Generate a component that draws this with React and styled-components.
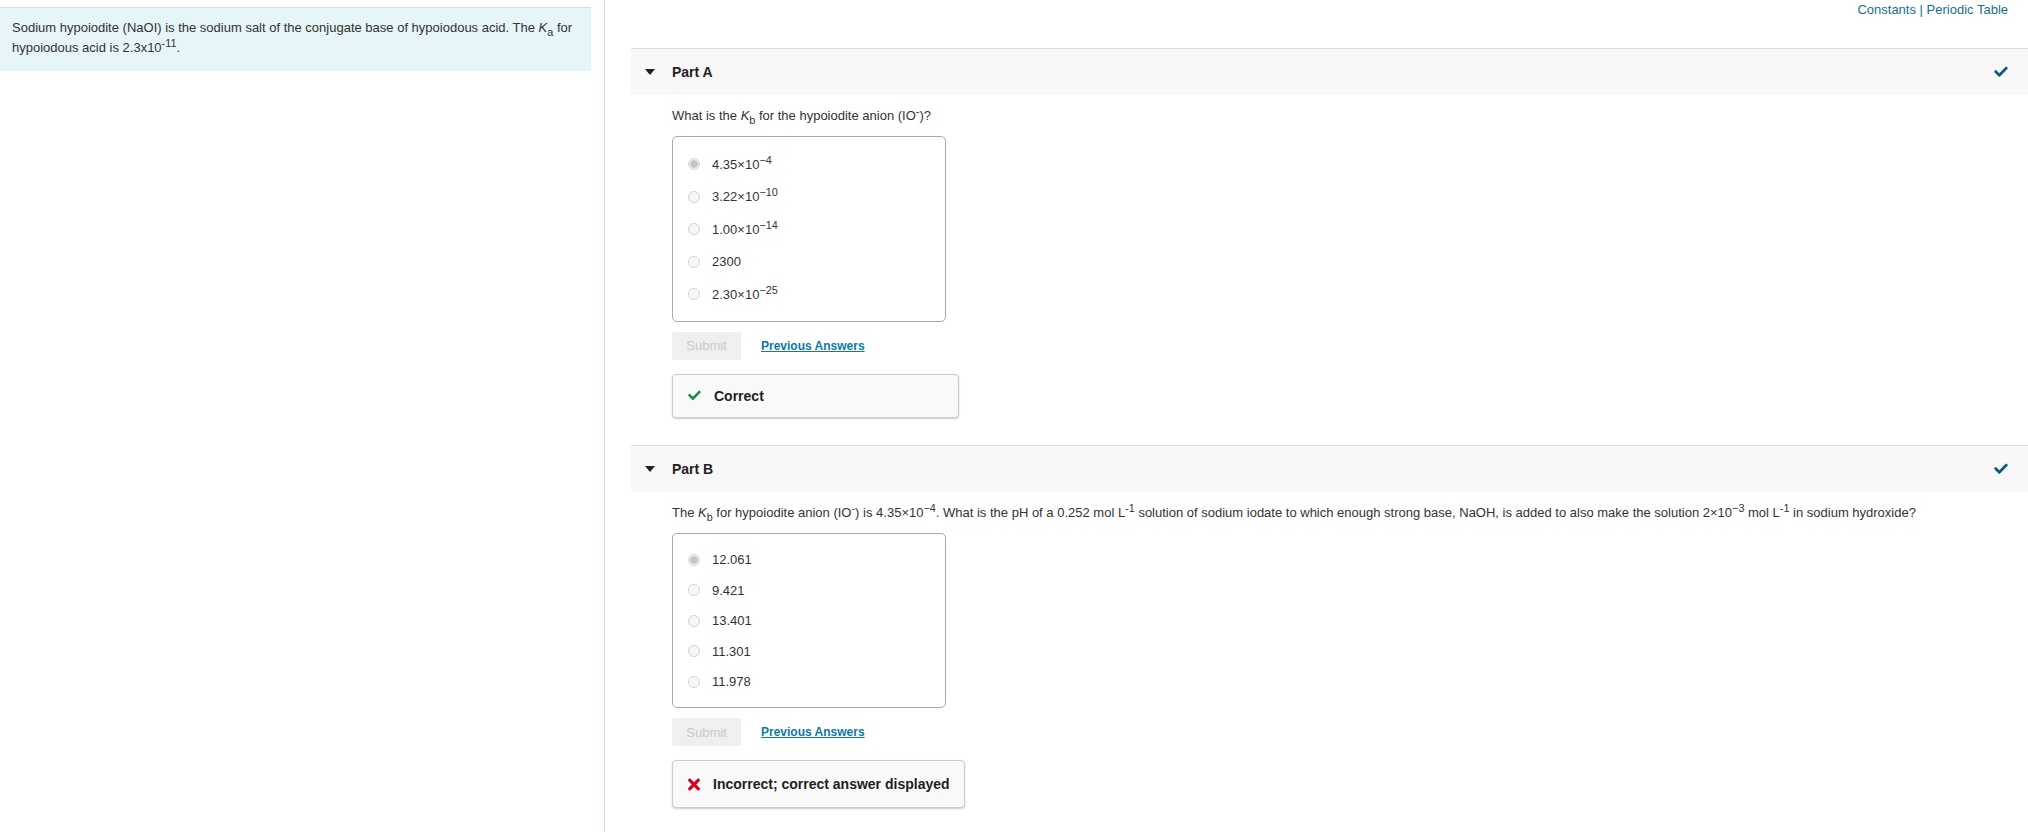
import React from 'react'
import styled, { createGlobalStyle } from 'styled-components'

const GlobalStyle = createGlobalStyle`
  html, body { margin: 0; padding: 0; background: #fff; }
  body {
    font-family: "Liberation Sans", Arial, sans-serif;
    color: #222;
    -webkit-font-smoothing: antialiased;
  }
  sup, sub { line-height: 0; }
`

const Page = styled.div`
  display: flex;
  min-height: 832px;
`

const Intro = styled.aside`
  flex: 0 0 604px;
  padding-top: 7px;
  border-right: 1px solid #c9d7e1;
`

const IntroBox = styled.div`
  width: 591px;
  box-sizing: border-box;
  background: #e6f5f7;
  border-top: 1px solid #dcdcdc;
  padding: 10px 12px 13px;
  font-size: 13px;
  line-height: 20px;
  color: #333;
`

const Main = styled.main`
  flex: 1;
  padding-left: 26px;
`

const TopLinks = styled.div`
  height: 48px;
  box-sizing: border-box;
  padding: 1px 20px 0 0;
  text-align: right;
  font-size: 13px;
  line-height: 17px;
  color: #1a6e8e;
`

const TopLink = styled.a`
  color: #1a6e8e;
  text-decoration: none;
`

const PartHeader = styled.div`
  display: flex;
  align-items: center;
  height: 47px;
  box-sizing: border-box;
  border-top: 1px solid #dddddd;
  background: #f8f8f8;
  padding: 0 20px 0 14px;
`

const Caret = styled.span`
  width: 0;
  height: 0;
  border-left: 5.5px solid transparent;
  border-right: 5.5px solid transparent;
  border-top: 6px solid #222;
  margin-right: 17px;
`

const PartTitle = styled.h2`
  flex: 1;
  margin: 0;
  font-size: 14px;
  font-weight: bold;
  color: #222;
`

const PartBody = styled.div`
  padding: 11px 0 27px 41px;
`

const Question = styled.p`
  margin: 0 0 10px;
  font-size: 13px;
  line-height: 20px;
  color: #333;
`

const Choices = styled.div`
  width: 274px;
  box-sizing: border-box;
  border: 1px solid #aaaaaa;
  border-radius: 5px;
  padding: 11px 0 10px 15px;
`

const Choice = styled.label`
  display: flex;
  align-items: center;
  height: ${p => p.$h}px;
  font-size: 13px;
  color: #333;
`

const Radio = styled.span`
  width: 12px;
  height: 12px;
  box-sizing: border-box;
  border-radius: 50%;
  border: 1px solid #d4d4d4;
  background: ${p => (p.$on ? 'radial-gradient(circle, #c4c4c4 0 3.5px, #efefef 4px)' : '#f7f7f7')};
  margin-right: 12px;
`

const Actions = styled.div`
  display: flex;
  align-items: center;
  gap: 20px;
  margin-top: 10px;
`

const SubmitButton = styled.button`
  width: 69px;
  height: 28px;
  border: none;
  border-radius: 2px;
  background: #efefef;
  color: #cacaca;
  font-family: inherit;
  font-size: 13px;
`

const PrevLink = styled.a`
  font-size: 12px;
  font-weight: bold;
  color: #0a7ba3;
  text-decoration: underline;
`

const Feedback = styled.div`
  display: inline-flex;
  align-items: center;
  min-width: 287px;
  height: ${p => p.$h}px;
  box-sizing: border-box;
  margin-top: 14px;
  padding: 0 14px 0 15px;
  border: 1px solid #cccccc;
  border-radius: 4px;
  background: #f9f9f9;
  box-shadow: 0 1px 2px rgba(0, 0, 0, 0.2);
  font-size: 14px;
  font-weight: bold;
  color: #1f1f1f;
  gap: 13px;
`

const CheckIcon = ({ color, size }) => (
  <svg width={size} height={size * 0.8} viewBox="0 40 512 420" fill={color}>
    <path d="M173.9 439.4l-166.4-166.4c-10-10-10-26.2 0-36.2l36.2-36.2c10-10 26.2-10 36.2 0L192 312.7 432.1 72.6c10-10 26.2-10 36.2 0l36.2 36.2c10 10 10 26.2 0 36.2l-294.4 294.4c-10 10-26.2 10-36.2 0z" />
  </svg>
)

const CrossIcon = () => (
  <svg width="12" height="15" viewBox="0 80 352 352" fill="#d7001f">
    <path d="M242.7 256l100.1-100.1c12.3-12.3 12.3-32.2 0-44.5l-22.2-22.2c-12.3-12.3-32.2-12.3-44.5 0L176 189.3 75.9 89.2c-12.3-12.3-32.2-12.3-44.5 0L9.2 111.4c-12.3 12.3-12.3 32.2 0 44.5L109.3 256 9.2 356.1c-12.3 12.3-12.3 32.2 0 44.5l22.2 22.2c12.3 12.3 32.2 12.3 44.5 0L176 322.7l100.1 100.1c12.3 12.3 32.2 12.3 44.5 0l22.2-22.2c12.3-12.3 12.3-32.2 0-44.5L242.7 256z" />
  </svg>
)

const Sci = ({ m, e }) => (
  <>
    {m}×10<sup>−{e}</sup>
  </>
)

const Kb = () => (
  <>
    <i>K</i>
    <sub>b</sub>
  </>
)

const IO = () => (
  <>
    (IO<sup>-</sup>)
  </>
)

const partA = [
  <Sci m="4.35" e="4" />,
  <Sci m="3.22" e="10" />,
  <Sci m="1.00" e="14" />,
  '2300',
  <Sci m="2.30" e="25" />,
]

const partB = ['12.061', '9.421', '13.401', '11.301', '11.978']

function Part({ title, question, options, rowHeight, correct }) {
  return (
    <section>
      <PartHeader>
        <Caret />
        <PartTitle>{title}</PartTitle>
        <CheckIcon color="#0e5a7b" size={14} />
      </PartHeader>
      <PartBody>
        <Question>{question}</Question>
        <Choices>
          {options.map((o, i) => (
            <Choice key={i} $h={rowHeight}>
              <Radio $on={i === 0} />
              <span>{o}</span>
            </Choice>
          ))}
        </Choices>
        <Actions>
          <SubmitButton disabled>Submit</SubmitButton>
          <PrevLink href="#">Previous Answers</PrevLink>
        </Actions>
        {correct ? (
          <Feedback $h={44}>
            <CheckIcon color="#1c8a3e" size={13} />
            Correct
          </Feedback>
        ) : (
          <Feedback $h={48}>
            <CrossIcon />
            Incorrect; correct answer displayed
          </Feedback>
        )}
      </PartBody>
    </section>
  )
}

export default function App() {
  return (
    <>
      <GlobalStyle />
      <Page>
        <Intro>
          <IntroBox>
            Sodium hypoiodite (NaOI) is the sodium salt of the conjugate base of hypoiodous acid. The{' '}
            <i>K</i>
            <sub>a</sub> for hypoiodous acid is 2.3x10<sup>-11</sup>.
          </IntroBox>
        </Intro>
        <Main>
          <TopLinks>
            <TopLink href="#">Constants</TopLink> | <TopLink href="#">Periodic Table</TopLink>
          </TopLinks>
          <Part
            title="Part A"
            question={
              <>
                What is the <Kb /> for the hypoiodite anion <IO />?
              </>
            }
            options={partA}
            rowHeight={32.5}
            correct
          />
          <Part
            title="Part B"
            question={
              <>
                The <Kb /> for hypoiodite anion <IO /> is <Sci m="4.35" e="4" />. What is the pH of a 0.252 mol L
                <sup>-1</sup> solution of sodium iodate to which enough strong base, NaOH, is added to also make the
                solution 2×10<sup>−3</sup> mol L<sup>-1</sup> in sodium hydroxide?
              </>
            }
            options={partB}
            rowHeight={30.5}
          />
        </Main>
      </Page>
    </>
  )
}
